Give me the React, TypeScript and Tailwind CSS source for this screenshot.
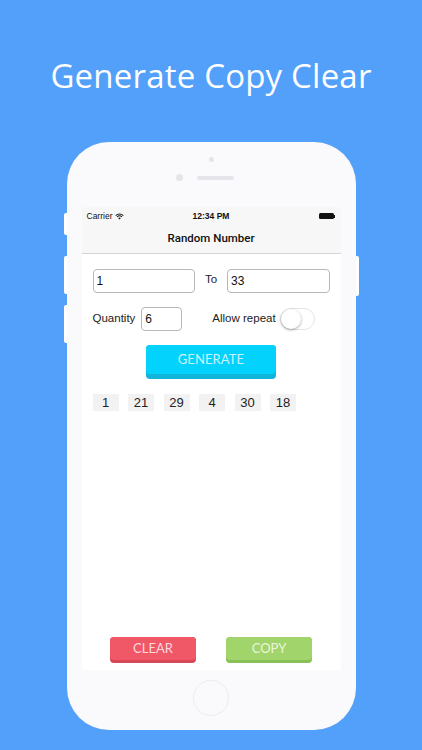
import React from "react";

const nums = ["1", "21", "29", "4", "30", "18"];

export default function App() {
  return (
    <div
      className="w-[422px] h-[750px] bg-[#52a0f9] overflow-hidden flex flex-col items-center"
      style={{ fontFamily: "'Liberation Sans', Arial, sans-serif" }}
    >
      <div
        className="mt-[51px] h-[48px] flex items-center text-white text-[33px] leading-none tracking-[0.2px]"
        style={{ fontFamily: "'Open Sans', 'Noto Sans', sans-serif" }}
      >
        Generate Copy Clear
      </div>

      {/* phone */}
      <div className="relative mt-[43px] w-[289px] h-[588px] bg-[#fafafc] rounded-[42px] flex flex-col">
        {/* side buttons */}
        <div className="absolute left-[-3px] top-[71px] w-[3px] h-[22px] bg-white rounded-l-[2px]" />
        <div className="absolute left-[-3px] top-[114px] w-[3px] h-[38px] bg-white rounded-l-[2px]" />
        <div className="absolute left-[-3px] top-[163px] w-[3px] h-[38px] bg-white rounded-l-[2px]" />
        <div className="absolute right-[-3px] top-[114px] w-[3px] h-[40px] bg-white rounded-r-[2px]" />

        {/* top bezel */}
        <div className="h-[65px] flex flex-col items-center">
          <div className="mt-[15px] w-[5px] h-[5px] rounded-full bg-[#e4e4ea]" />
          <div className="mt-[12px] flex items-center gap-[14px] -ml-[13px]">
            <div className="w-[7px] h-[7px] rounded-full bg-[#e4e4ea]" />
            <div className="w-[37px] h-[4px] rounded-full bg-[#e4e4ea]" />
          </div>
        </div>

        {/* screen */}
        <div className="mx-[15px] h-[463px] bg-white flex flex-col">
          {/* status bar */}
          <div className="h-[18px] bg-[#f7f7f7] flex items-center justify-between px-[5px] text-[8.5px] text-[#111]">
            <div className="flex items-center gap-[3px] w-[60px]">
              <span>Carrier</span>
              <svg width="9" height="7" viewBox="0 0 12 9">
                <path d="M6 8.5 L4.3 6.7 A2.5 2.5 0 0 1 7.7 6.7 Z" fill="#111" />
                <path d="M2.7 5.1 A4.8 4.8 0 0 1 9.3 5.1" stroke="#111" strokeWidth="1.4" fill="none" />
                <path d="M0.9 3.2 A7.4 7.4 0 0 1 11.1 3.2" stroke="#111" strokeWidth="1.4" fill="none" />
              </svg>
            </div>
            <span className="font-semibold">12:34 PM</span>
            <div className="w-[60px] flex justify-end items-center">
              <div className="w-[15px] h-[6px] bg-[#111] rounded-[1.5px]" />
              <div className="w-[1px] h-[3px] bg-[#111]" />
            </div>
          </div>
          {/* nav bar */}
          <div
            className="h-[29px] bg-[#f7f7f7] border-b border-[#d6d6d6] flex items-center justify-center text-[11.5px] font-medium text-[#111]"
            style={{ fontFamily: "Roboto, 'Liberation Sans', sans-serif" }}
          >
            Random Number
          </div>

          {/* content */}
          <div className="flex-1 flex flex-col px-[11px] pt-[15px]">
            <div className="flex items-center h-[24px]">
              <div className="w-[104px] h-[24px] border border-[#b8b8b8] rounded-[4px] flex items-center px-[3px] text-[12px] text-[#111]">1</div>
              <span className="ml-[10px] text-[11.5px] text-[#222] -mt-[2px]">To</span>
              <div className="ml-[10px] w-[104px] h-[24px] border border-[#b8b8b8] rounded-[4px] flex items-center px-[3px] text-[12px] text-[#111]">33</div>
            </div>

            <div className="flex items-center h-[24px] mt-[14px]">
              <span className="text-[11.5px] text-[#222]">Quantity</span>
              <div className="ml-[6px] w-[41px] h-[24px] border border-[#b8b8b8] rounded-[4px] flex items-center px-[3px] text-[12px] text-[#111]">6</div>
              <span className="ml-[30px] text-[11.5px] text-[#222]">Allow repeat</span>
              <div className="ml-[4px] w-[35px] h-[22px] rounded-full border border-[#e4e4e4] bg-white relative">
                <div className="absolute left-0 top-0 w-[20px] h-[20px] rounded-full bg-white shadow-[0_1px_3px_rgba(0,0,0,0.35)]" />
              </div>
            </div>

            <div className="flex justify-center mt-[14px]">
              <div
                className="w-[130px] h-[34px] rounded-[4px] bg-[#12b5da] flex"
                style={{ fontFamily: "Lato, sans-serif" }}
              >
                <div className="w-full h-[29px] rounded-[4px] bg-[#03d2fd] flex items-center justify-center text-[13px] text-[#c9f3ff] tracking-[0.1px]">
                  GENERATE
                </div>
              </div>
            </div>

            <div className="flex mt-[15px] gap-[9.5px]">
              {nums.map((n) => (
                <div key={n} className="w-[26px] h-[17px] bg-[#f2f2f2] flex items-center justify-center text-[13px] text-[#222]">
                  {n}
                </div>
              ))}
            </div>

            <div className="flex-1" />

            <div className="flex justify-center gap-[30px] mb-[7px]" style={{ fontFamily: "Lato, sans-serif" }}>
              <div className="w-[86px] h-[26px] rounded-[4px] bg-[#d84758]">
                <div className="h-[23px] rounded-[4px] bg-[#f05767] flex items-center justify-center text-[13px] text-[#fcd9dd]">CLEAR</div>
              </div>
              <div className="w-[86px] h-[26px] rounded-[4px] bg-[#88c058]">
                <div className="h-[23px] rounded-[4px] bg-[#a1d46a] flex items-center justify-center text-[13px] text-[#eaf6de]">COPY</div>
              </div>
            </div>
          </div>
        </div>

        {/* bottom bezel */}
        <div className="flex-1 flex items-center justify-center">
          <div className="w-[36px] h-[36px] rounded-full border border-[#ececf0] -mt-[4px]" />
        </div>
      </div>
    </div>
  );
}
